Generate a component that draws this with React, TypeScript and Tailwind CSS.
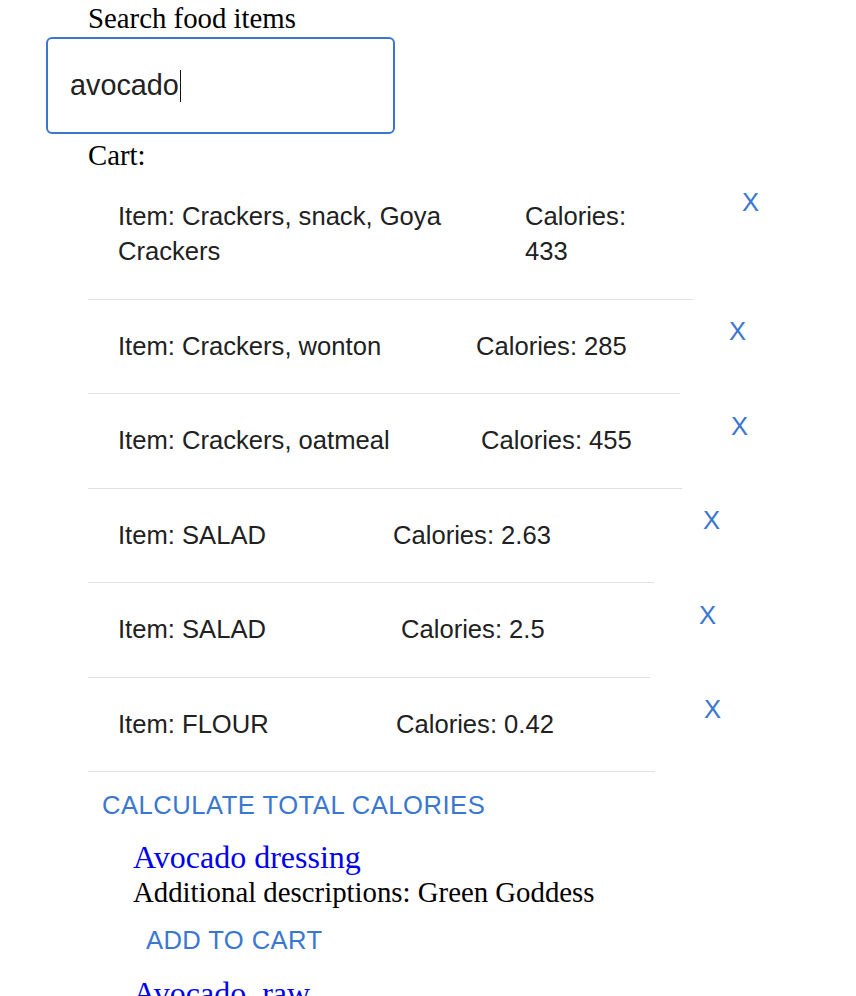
import React from 'react';

// 장바구니 행: 폭과 칼로리 열 위치는 스크린샷에서 잰 값
interface CartRow {
  name: string;
  calories: string;
  row: string; // 행 전체 폭 (구분선 길이)
  item: string; // 품목 칸 폭
  cal: string; // 칼로리 칸 폭
}

const cart: CartRow[] = [
  { name: 'Crackers, snack, Goya Crackers', calories: '433', row: 'w-[605px]', item: 'w-[407px]', cal: 'w-[120px]' },
  { name: 'Crackers, wonton', calories: '285', row: 'w-[592px]', item: 'w-[358px]', cal: 'w-[200px]' },
  { name: 'Crackers, oatmeal', calories: '455', row: 'w-[594px]', item: 'w-[363px]', cal: 'w-[200px]' },
  { name: 'SALAD', calories: '2.63', row: 'w-[566px]', item: 'w-[275px]', cal: 'w-[200px]' },
  { name: 'SALAD', calories: '2.5', row: 'w-[562px]', item: 'w-[283px]', cal: 'w-[200px]' },
  { name: 'FLOUR', calories: '0.42', row: 'w-[567px]', item: 'w-[278px]', cal: 'w-[200px]' },
];

const results = [
  { title: 'Avocado dressing', description: 'Green Goddess' },
  { title: 'Avocado, raw', description: 'California' },
];

const sans = "font-['Liberation_Sans','Helvetica','Arial',sans-serif]";

const App: React.FC = () => {
  return (
    <div className="h-[996px] overflow-hidden bg-white pt-[3px] font-['Liberation_Serif','Times_New_Roman',serif] text-black">
      {/* 검색 입력 */}
      <label className="ml-[88px] block text-[28.8px] leading-[30px]">Search food items</label>
      <div
        className={`ml-[46px] mt-[4px] flex h-[97px] w-[349px] items-center rounded-[6px] border-[2.5px] border-[#3a77cf] pl-[22px] text-[28.8px] text-[#222] ${sans}`}
      >
        <span>avocado</span>
        <span className="ml-[1px] h-[32px] w-[1.5px] bg-[#111]" />
      </div>

      {/* 장바구니 */}
      <div className="ml-[88px] mt-[6px] text-[28.8px] leading-[30px]">Cart:</div>
      <ul className={`ml-[88px] ${sans}`}>
        {cart.map((c, i) => (
          <li key={i} className="flex items-start">
            <div
              className={`flex border-b border-[#e0e0e0] pl-[30px] pt-[29px] pb-[29.5px] text-[25.6px] leading-[35px] text-[#212121] ${c.row}`}
            >
              <span className={c.item}>Item: {c.name}</span>
              <span className={c.cal}>Calories: {c.calories}</span>
            </div>
            <button className="ml-[49px] mt-[19.5px] text-[25.6px] leading-[25.6px] text-[#3a77cf]">X</button>
          </li>
        ))}
      </ul>

      <button
        className={`ml-[88px] mt-[1px] block px-[14px] py-[9.6px] text-[25.6px] leading-[44.8px] tracking-[0.5px] text-[#3a77cf] ${sans}`}
      >
        CALCULATE TOTAL CALORIES
      </button>

      {/* 검색 결과 */}
      <div className="ml-[133px]">
        {results.map((r) => (
          <div key={r.title} className="pt-[2px]">
            <a className="block text-[32px] leading-[36.8px] text-[#0000ee]">{r.title}</a>
            <div className="text-[28.8px] leading-[33px]">Additional descriptions: {r.description}</div>
            <button
              className={`block px-[13px] py-[9.6px] text-[25.6px] leading-[44.8px] tracking-[0.4px] text-[#3a77cf] ${sans}`}
            >
              ADD TO CART
            </button>
          </div>
        ))}
      </div>
    </div>
  );
};

export default App;
